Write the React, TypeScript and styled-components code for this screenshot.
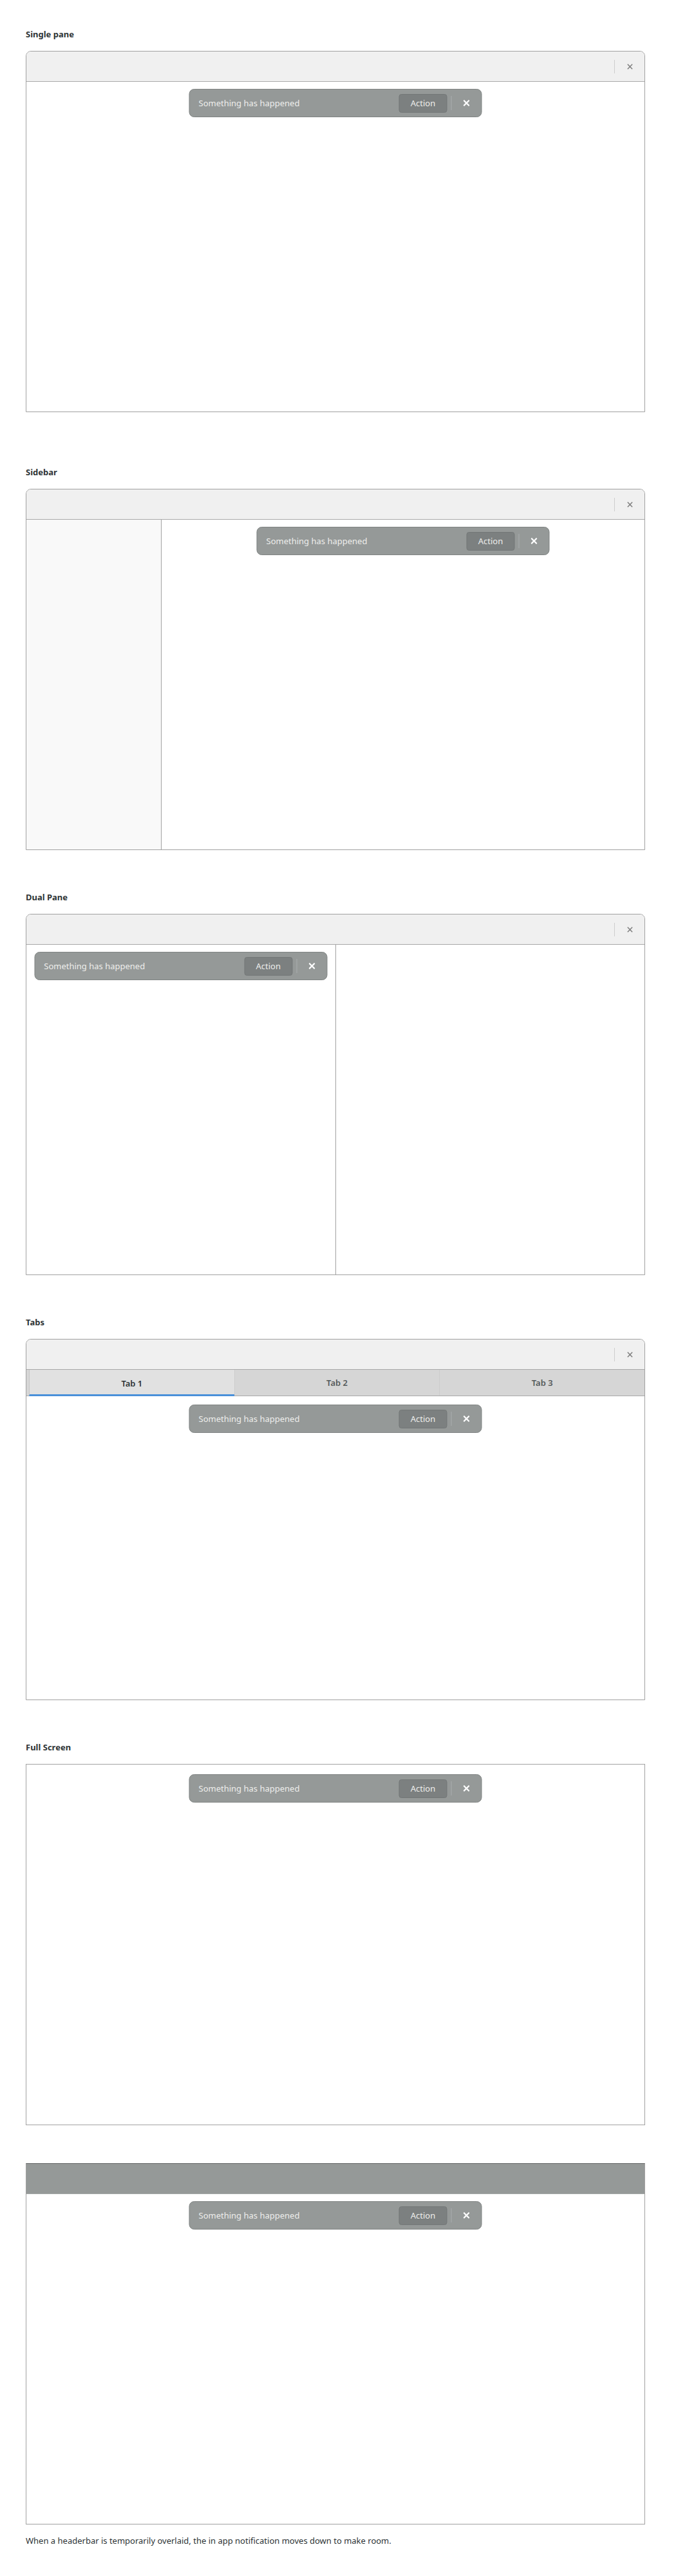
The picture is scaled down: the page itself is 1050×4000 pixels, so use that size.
import React from 'react';
import styled, { createGlobalStyle } from 'styled-components';

const Global = createGlobalStyle`
  html, body { margin: 0; padding: 0; background: #ffffff; }
  body {
    font-family: "Noto Sans", "DejaVu Sans", sans-serif;
    color: #2e3436;
  }
`;

const Page = styled.div`
  padding: 43px 0 40px 40px;
  width: 962px;
`;

const Section = styled.section<{ $gap: number }>`
  margin-top: ${(p) => p.$gap}px;
`;

const Title = styled.h3`
  margin: 0 0 16px;
  font-size: 13px;
  line-height: 20px;
  font-weight: 700;
  color: #2e3436;
`;

const Window = styled.div<{ $rounded?: boolean; $overlaid?: boolean }>`
  position: relative;
  height: 561px;
  box-sizing: border-box;
  border: 1px solid #a1a1a1;
  border-top-color: ${(p) => (p.$overlaid ? '#5f6161' : '#a1a1a1')};
  border-radius: ${(p) => (p.$rounded ? '8px 8px 0 0' : '0')};
  display: flex;
  flex-direction: column;
  background: #ffffff;
  overflow: hidden;
`;

const HeaderBar = styled.div<{ $overlaid?: boolean }>`
  flex: none;
  height: 47px;
  box-sizing: border-box;
  background: ${(p) => (p.$overlaid ? '#959998' : '#f0f0f0')};
  border-bottom: 1px solid ${(p) => (p.$overlaid ? '#a3a7a6' : '#a8a8a8')};
  display: flex;
  justify-content: flex-end;
  align-items: center;
`;

const HeaderSeparator = styled.div`
  width: 1px;
  height: 21px;
  background: #cdcdcd;
`;

const HeaderClose = styled.div`
  width: 46px;
  height: 46px;
  display: flex;
  align-items: center;
  justify-content: center;
  color: #7b7b7b;
`;

const Body = styled.div`
  flex: 1;
  display: flex;
  min-height: 0;
`;

const Pane = styled.div<{ $divider?: boolean; $top?: number }>`
  position: relative;
  flex: 1;
  border-right: ${(p) => (p.$divider ? '1px solid #a1a1a1' : 'none')};
`;

const Sidebar = styled.div`
  flex: none;
  width: 210px;
  box-sizing: border-box;
  background: #f9f9f9;
  border-right: 1px solid #a1a1a1;
`;

const TabBar = styled.div`
  flex: none;
  height: 41px;
  box-sizing: border-box;
  display: flex;
  padding-left: 4px;
  background: #d6d6d6;
  border-bottom: 1px solid #a8a8a8;
`;

const Tab = styled.div<{ $active?: boolean }>`
  flex: 1;
  display: flex;
  align-items: center;
  justify-content: center;
  font-size: 13px;
  font-weight: 600;
  color: ${(p) => (p.$active ? '#2e3436' : '#555a5b')};
  background: ${(p) => (p.$active ? '#e1e1e1' : '#d6d6d6')};
  border-left: 1px solid ${(p) => (p.$active ? '#c6c6c6' : '#cdcdcd')};
  box-sizing: border-box;
  ${(p) =>
    p.$active
      ? 'border-bottom: 3px solid #4a90d9; margin-bottom: -1px; padding-top: 3px;'
      : ''}
`;

const Notification = styled.div<{ $top: number }>`
  position: absolute;
  top: ${(p) => p.$top}px;
  left: 50%;
  transform: translateX(-50%);
  width: 455px;
  height: 44px;
  box-sizing: border-box;
  display: flex;
  align-items: center;
  padding-left: 14px;
  background: #959998;
  border: 1px solid #7f8382;
  border-radius: 8px;
  color: #eeeeec;
  font-size: 13px;
`;

const NotificationText = styled.span`
  flex: 1;
`;

const ActionButton = styled.div`
  width: 75px;
  height: 29px;
  box-sizing: border-box;
  display: flex;
  align-items: center;
  justify-content: center;
  background: #7c8080;
  border: 1px solid #737777;
  border-radius: 4px;
  color: #eeeeec;
  font-size: 13px;
`;

const NotificationSeparator = styled.div`
  width: 1px;
  height: 22px;
  margin-left: 6px;
  background: #aaaead;
`;

const NotificationClose = styled.div`
  width: 46px;
  display: flex;
  align-items: center;
  justify-content: center;
  color: #ffffff;
`;

const Caption = styled.p`
  margin: 15px 0 0;
  font-size: 13px;
  line-height: 20px;
  color: #2e3436;
`;

const XIcon = ({ size, stroke }: { size: number; stroke: number }) => (
  <svg width={size} height={size} viewBox="0 0 10 10" fill="none">
    <path
      d="M1.5 1.5 L8.5 8.5 M8.5 1.5 L1.5 8.5"
      stroke="currentColor"
      strokeWidth={stroke}
      strokeLinecap="square"
    />
  </svg>
);

const InAppNotification = ({ top }: { top: number }) => (
  <Notification $top={top}>
    <NotificationText>Something has happened</NotificationText>
    <ActionButton>Action</ActionButton>
    <NotificationSeparator />
    <NotificationClose>
      <XIcon size={10} stroke={2.2} />
    </NotificationClose>
  </Notification>
);

const Header = () => (
  <HeaderBar>
    <HeaderSeparator />
    <HeaderClose>
      <XIcon size={9} stroke={1.6} />
    </HeaderClose>
  </HeaderBar>
);

export default function App() {
  return (
    <>
      <Global />
      <Page>
        <Section $gap={0}>
          <Title>Single pane</Title>
          <Window $rounded>
            <Header />
            <Body>
              <Pane>
                <InAppNotification top={11} />
              </Pane>
            </Body>
          </Window>
        </Section>

        <Section $gap={83}>
          <Title>Sidebar</Title>
          <Window $rounded>
            <Header />
            <Body>
              <Sidebar />
              <Pane>
                <InAppNotification top={11} />
              </Pane>
            </Body>
          </Window>
        </Section>

        <Section $gap={63}>
          <Title>Dual Pane</Title>
          <Window $rounded>
            <Header />
            <Body>
              <Pane $divider>
                <InAppNotification top={11} />
              </Pane>
              <Pane />
            </Body>
          </Window>
        </Section>

        <Section $gap={63}>
          <Title>Tabs</Title>
          <Window $rounded>
            <Header />
            <TabBar>
              <Tab $active>Tab 1</Tab>
              <Tab>Tab 2</Tab>
              <Tab>Tab 3</Tab>
            </TabBar>
            <Body>
              <Pane>
                <InAppNotification top={13} />
              </Pane>
            </Body>
          </Window>
        </Section>

        <Section $gap={63}>
          <Title>Full Screen</Title>
          <Window>
            <Body>
              <Pane>
                <InAppNotification top={15} />
              </Pane>
            </Body>
          </Window>
        </Section>

        <Section $gap={59}>
          <Window $overlaid>
            <HeaderBar $overlaid />
            <Body>
              <Pane>
                <InAppNotification top={11} />
              </Pane>
            </Body>
          </Window>
          <Caption>
            When a headerbar is temporarily overlaid, the in app notification moves down to make room.
          </Caption>
        </Section>
      </Page>
    </>
  );
}
